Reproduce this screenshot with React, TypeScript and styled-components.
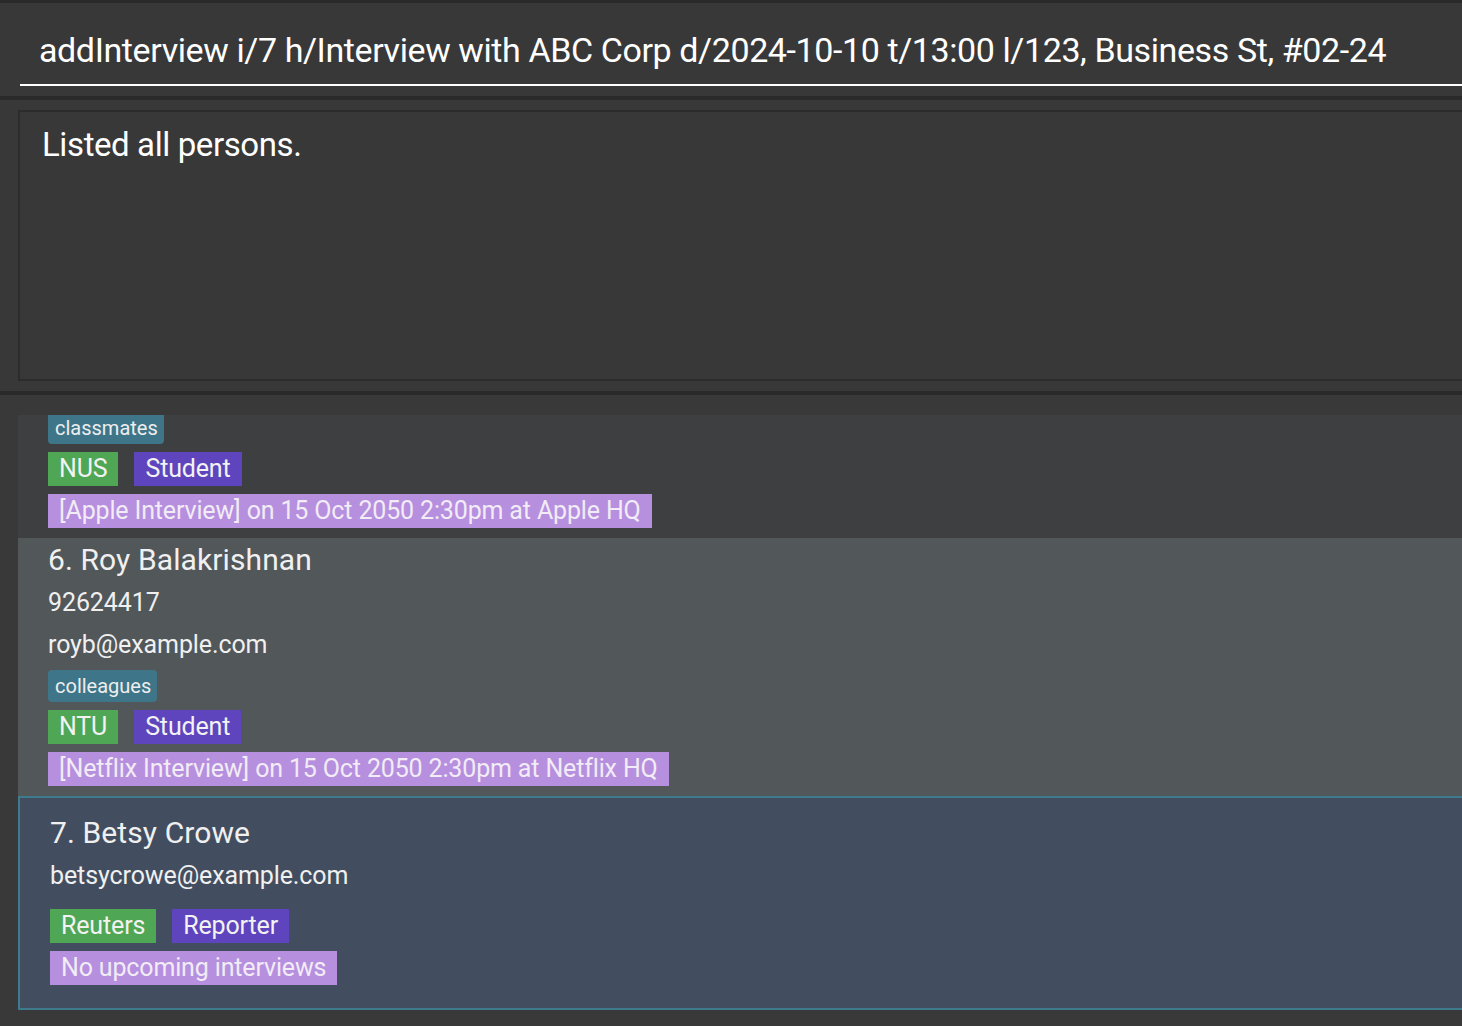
import React, { useLayoutEffect, useRef } from "react";
import styled, { createGlobalStyle } from "styled-components";

const Global = createGlobalStyle`
  html, body { margin: 0; padding: 0; background: #383838; overflow: hidden; }
  body { font-family: Roboto, "Noto Sans", sans-serif; }
`;

const Root = styled.div`
  width: 1462px;
  height: 1026px;
  display: flex;
  flex-direction: column;
  overflow: hidden;
  background: #383838;
`;

const Edge = styled.div<{ $h: number }>`
  height: ${(p) => p.$h}px;
  flex: none;
  background: #2a2a2a;
`;

const CommandBar = styled.div`
  height: 93px;
  flex: none;
  display: flex;
  align-items: flex-end;
  padding: 0 0 10px 20px;
  box-sizing: border-box;
  background: #383838;
`;

const CommandInput = styled.div`
  flex: 1;
  border-bottom: 2px solid #ffffff;
  padding: 0 0 10px 19px;
  font-size: 34px;
  line-height: 48px;
  letter-spacing: -0.4px;
  color: #ffffff;
  white-space: nowrap;
`;

const ResultPane = styled.div`
  height: 291px;
  flex: none;
  box-sizing: border-box;
  padding: 10px 0 10px 18px;
  display: flex;
`;

const ResultBox = styled.div`
  flex: 1;
  border: 2px solid #2c2c2c;
  border-right: none;
  background: #383838;
  padding: 9px 0 0 22px;
  font-size: 33px;
  line-height: 48px;
  letter-spacing: -0.4px;
  color: #ffffff;
`;

const ListPane = styled.div`
  flex: 1;
  min-height: 0;
  box-sizing: border-box;
  padding: 20px 0 0 18px;
  display: flex;
  flex-direction: column;
  background: #393939;
`;

const ListViewport = styled.div`
  flex: 1;
  min-height: 0;
  overflow: hidden;
  padding-bottom: 40px;
`;

const Card = styled.div<{ $variant: "odd" | "even" | "selected" }>`
  display: flex;
  flex-direction: column;
  box-sizing: border-box;
  padding: ${(p) => (p.$variant === "selected" ? "13px 0 23px 30px" : "0 0 10px 30px")};
  background: ${(p) =>
    p.$variant === "selected" ? "#424e5f" : p.$variant === "even" ? "#52575a" : "#3d3f41"};
  border: ${(p) => (p.$variant === "selected" ? "2px solid #3d7b8d" : "none")};
  border-right: none;
  color: #f0f0f0;
`;

const Name = styled.div`
  font-size: 30px;
  line-height: 44px;
  letter-spacing: 0.1px;
`;

const Field = styled.div`
  font-size: 25px;
  line-height: 42px;
  letter-spacing: -0.1px;
`;

const TagRow = styled.div`
  display: flex;
  gap: 16px;
  margin-top: 4px;
`;

const Row = styled.div`
  display: flex;
  gap: 16px;
  margin-top: 8px;
`;

const Tag = styled.span`
  height: 32px;
  line-height: 32px;
  padding: 0 6px 0 7px;
  border-radius: 4px;
  background: #3e7589;
  font-size: 20px;
  color: #eeeeee;
`;

const Label = styled.span<{ $kind: "org" | "role" | "interview" }>`
  height: 34px;
  line-height: 34px;
  padding: 0 11px;
  font-size: 25px;
  letter-spacing: -0.15px;
  color: ${(p) => (p.$kind === "interview" ? "#f1ecf5" : "#f2f2f2")};
  background: ${(p) =>
    p.$kind === "org" ? "#4fa654" : p.$kind === "role" ? "#5e45be" : "#b78fdf"};
`;

type Person = {
  index: number;
  name: string;
  phone?: string;
  email: string;
  tags: string[];
  org: string;
  role: string;
  interview: string;
};

const people: Person[] = [
  {
    index: 5,
    name: "Irfan Ibrahim",
    phone: "92492021",
    email: "irfan@example.com",
    tags: ["classmates"],
    org: "NUS",
    role: "Student",
    interview: "[Apple Interview] on 15 Oct 2050 2:30pm at Apple HQ",
  },
  {
    index: 6,
    name: "Roy Balakrishnan",
    phone: "92624417",
    email: "royb@example.com",
    tags: ["colleagues"],
    org: "NTU",
    role: "Student",
    interview: "[Netflix Interview] on 15 Oct 2050 2:30pm at Netflix HQ",
  },
  {
    index: 7,
    name: "Betsy Crowe",
    email: "betsycrowe@example.com",
    tags: [],
    org: "Reuters",
    role: "Reporter",
    interview: "No upcoming interviews",
  },
];

function PersonCard({ p, variant }: { p: Person; variant: "odd" | "even" | "selected" }) {
  return (
    <Card $variant={variant}>
      <Name>
        {p.index}. {p.name}
      </Name>
      {p.phone && <Field>{p.phone}</Field>}
      <Field>{p.email}</Field>
      <TagRow>
        {p.tags.map((t) => (
          <Tag key={t}>{t}</Tag>
        ))}
      </TagRow>
      <Row>
        <Label $kind="org">{p.org}</Label>
        <Label $kind="role">{p.role}</Label>
      </Row>
      <Row>
        <Label $kind="interview">{p.interview}</Label>
      </Row>
    </Card>
  );
}

export default function App() {
  const viewport = useRef<HTMLDivElement>(null);
  useLayoutEffect(() => {
    if (viewport.current) viewport.current.scrollTop = 135;
  }, []);
  return (
    <>
      <Global />
      <Root>
        <Edge $h={3} />
        <CommandBar>
          <CommandInput>
            addInterview i/7 h/Interview with ABC Corp d/2024-10-10 t/13:00 l/123, Business St, #02-24
          </CommandInput>
        </CommandBar>
        <Edge $h={4} />
        <ResultPane>
          <ResultBox>Listed all persons.</ResultBox>
        </ResultPane>
        <Edge $h={4} />
        <ListPane>
          <ListViewport ref={viewport}>
            {people.map((p, i) => (
              <PersonCard
                key={p.index}
                p={p}
                variant={p.index === 7 ? "selected" : i % 2 === 0 ? "odd" : "even"}
              />
            ))}
          </ListViewport>
        </ListPane>
      </Root>
    </>
  );
}
